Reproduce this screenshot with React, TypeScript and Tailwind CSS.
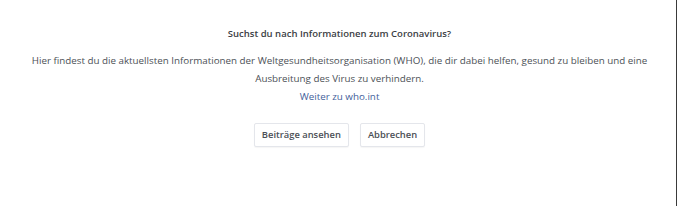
export default function App() {
  return (
    <div className="flex h-[206px] w-[680px] bg-white">
      <div
        className="flex h-full w-[677px] flex-col items-center border-r border-[#3a3a3a] pl-[3px] pt-[27px] text-center text-[#4b4f56]"
        style={{ fontFamily: '"Open Sans", "Noto Sans", sans-serif' }}
      >
        <h2 className="text-[9.5px] font-semibold leading-[14px] text-[#3b3e44]">
          Suchst du nach Informationen zum Coronavirus?
        </h2>

        <p className="mt-[11px] w-[650px] text-[9.8px] leading-[18px]">
          Hier findest du die aktuellsten Informationen der Weltgesundheitsorganisation (WHO), die dir dabei helfen, gesund zu bleiben und eine
          Ausbreitung des Virus zu verhindern.
        </p>

        <a className="text-[9.8px] leading-[17px] text-[#42609a]">
          Weiter zu who.int
        </a>

        <div className="mt-[18px] flex gap-[11px]">
          <button className="h-[24px] rounded-[2px] border border-[#e4e6eb] bg-white px-[7px] text-[9.4px] font-semibold text-[#4b4f56] shadow-[0_1px_1px_rgba(0,0,0,0.04)]">
            Beiträge ansehen
          </button>
          <button className="h-[24px] rounded-[2px] border border-[#e4e6eb] bg-white px-[7px] text-[9.4px] font-semibold text-[#4b4f56] shadow-[0_1px_1px_rgba(0,0,0,0.04)]">
            Abbrechen
          </button>
        </div>
      </div>
    </div>
  );
}
